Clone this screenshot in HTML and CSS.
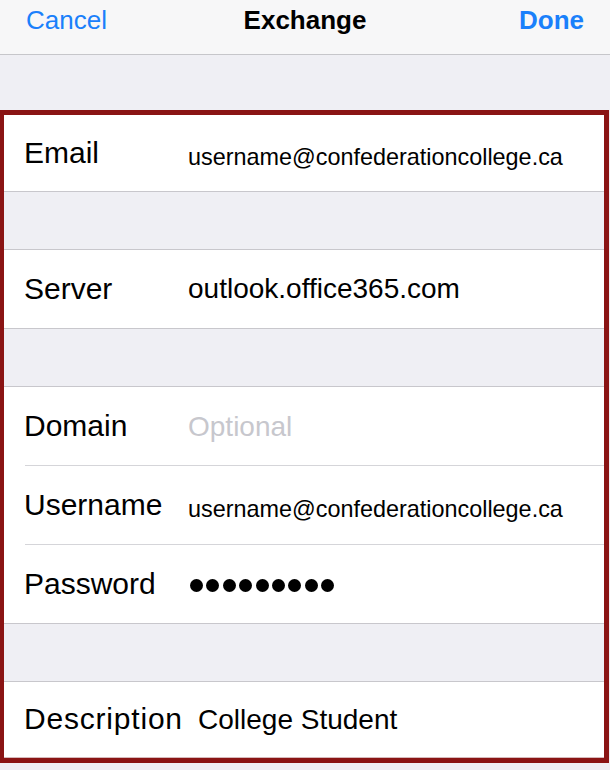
FILE: index.html
```html
<!DOCTYPE html>
<html lang="en">
<head>
<meta charset="utf-8">
<title>Exchange</title>
<link rel="stylesheet" href="styles.css">
</head>
<body>
<header class="navbar">
  <span class="nav-btn nav-left">Cancel</span>
  <span class="nav-title">Exchange</span>
  <span class="nav-btn nav-right">Done</span>
</header>
<div class="top-gap"></div>
<main class="frame">
  <section class="group">
    <div class="row row-first">
      <span class="label">Email</span>
      <span class="value small">username@confederationcollege.ca</span>
    </div>
  </section>
  <div class="spacer"></div>
  <section class="group">
    <div class="row">
      <span class="label">Server</span>
      <span class="value">outlook.office365.com</span>
    </div>
  </section>
  <div class="spacer"></div>
  <section class="group">
    <div class="row inset">
      <span class="label">Domain</span>
      <span class="value placeholder">Optional</span>
    </div>
    <div class="row inset">
      <span class="label">Username</span>
      <span class="value small">username@confederationcollege.ca</span>
    </div>
    <div class="row">
      <span class="label">Password</span>
      <span class="value dots" aria-label="password">
        <i></i><i></i><i></i><i></i><i></i><i></i><i></i><i></i><i></i>
      </span>
    </div>
  </section>
  <div class="spacer"></div>
  <section class="group">
    <div class="row row-last wide">
      <span class="label">Description</span>
      <span class="value">College Student</span>
    </div>
  </section>
</main>
</body>
</html>
```

FILE: styles.css
```css
* { box-sizing: border-box; }

html, body {
  margin: 0;
  padding: 0;
  background: #efeff4;
  font-family: "Liberation Sans", Arial, sans-serif;
  color: #000;
  width: 610px;
  height: 770px;
  overflow: hidden;
}

.navbar {
  height: 55px;
  background: #f7f7f8;
  border-bottom: 1px solid #c6c6ca;
  display: grid;
  grid-template-columns: 1fr auto 1fr;
  align-items: start;
  padding: 0 26px 0 26px;
  font-size: 26px;
  line-height: 40px;
}

.nav-btn { color: #1a80fb; }
.nav-left { justify-self: start; }
.nav-right { justify-self: end; font-weight: bold; }
.nav-title { font-weight: bold; color: #000; }

.top-gap {
  height: 55px;
  background: #efeff4;
}

.frame {
  width: 609px;
  border: 5px solid #8a1414;
  border-left-width: 4px;
  background: #efeff4;
}

.group {
  background: #fff;
}

.row {
  height: 79px;
  display: flex;
  align-items: center;
  padding-left: 20px;
  border-bottom: 1px solid #c8c7cc;
}

.row.inset {
  border-bottom: none;
  background-image: linear-gradient(#d5d5d9, #d5d5d9);
  background-size: calc(100% - 21px) 1px;
  background-position: right bottom;
  background-repeat: no-repeat;
}

.row-first { height: 77px; }
.row-last { height: 76px; border-bottom: 1px solid #d6b9bb; }

.label {
  font-size: 30px;
  min-width: 164px;
  padding-bottom: 1px;
}

.wide .label {
  min-width: 174px;
  letter-spacing: 0.8px;
  margin-right: 0;
}

.value {
  font-size: 28px;
}

.value.small {
  font-size: 23.4px;
  padding-top: 8px;
}

.value.placeholder { color: #c7c7cd; }

.dots {
  display: flex;
  gap: 3.4px;
  padding-left: 2px;
  padding-top: 2px;
}

.dots i {
  display: block;
  width: 13px;
  height: 13px;
  border-radius: 50%;
  background: #000;
}

.spacer {
  height: 58px;
  background: #efeff4;
  border-bottom: 1px solid #c8c7cc;
}
```
